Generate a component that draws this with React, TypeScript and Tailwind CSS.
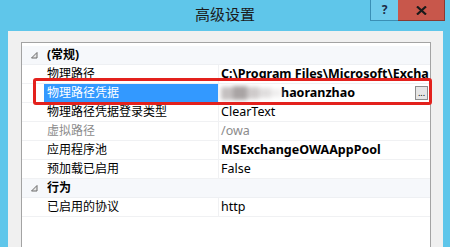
import React from "react";

interface Row {
  label: string;
  value?: string;
  category?: boolean;
  bold?: boolean;
  muted?: boolean;
  selected?: boolean;
}

const rows: Row[] = [
  { label: "(常规)", category: true },
  { label: "物理路径", value: "C:\\Program Files\\Microsoft\\Excha", bold: true },
  { label: "物理路径凭据", value: "haoranzhao", bold: true, selected: true },
  { label: "物理路径凭据登录类型", value: "ClearText" },
  { label: "虚拟路径", value: "/owa", muted: true },
  { label: "应用程序池", value: "MSExchangeOWAAppPool", bold: true },
  { label: "预加载已启用", value: "False" },
  { label: "行为", category: true },
  { label: "已启用的协议", value: "http" },
];

const font = { fontFamily: '"Noto Sans", "Noto Sans CJK SC", sans-serif' };

function Expander() {
  return (
    <svg width="7" height="7" viewBox="0 0 7 7">
      <path d="M6 0.5 L6 6 L0.5 6 Z" fill="#e8e8e8" stroke="#6b6b6b" strokeWidth="1" />
    </svg>
  );
}

function GridRow({ row }: { row: Row }) {
  if (row.category) {
    return (
      <div className="flex h-[19px] items-center bg-[#f6f8fb] border-b border-[#eef0f3]">
        <div className="w-[22px] flex justify-center pl-[2px]">
          <Expander />
        </div>
        <div className="pl-[3px] text-[12px] font-bold text-black leading-none">{row.label}</div>
      </div>
    );
  }
  return (
    <div className="flex h-[19px] items-stretch border-b border-[#f0f1f3]">
      <div className="w-[22px] shrink-0" />
      <div
        className={
          row.selected
            ? "w-[174px] shrink-0 flex items-center pl-[3px] bg-[#3399ff] text-white text-[12px]"
            : row.muted
            ? "w-[174px] shrink-0 flex items-center pl-[3px] text-[#8c8c8c] text-[12px]"
            : "w-[174px] shrink-0 flex items-center pl-[3px] text-black text-[12px]"
        }
      >
        {row.label}
      </div>
      <div className="flex-1 min-w-0 flex items-center pl-[2px] overflow-hidden border-l border-[#f0f1f3]">
        {row.selected && (
          <div className="flex items-center w-[60px] h-[14px] shrink-0 blur-[2px]">
            <div className="w-[12px] h-[13px] bg-[#c4c0c0]" />
            <div className="w-[14px] h-[14px] bg-[#a9a4a4]" />
            <div className="w-[12px] h-[12px] bg-[#cfcbcb]" />
            <div className="w-[12px] h-[10px] bg-[#e0dede]" />
            <div className="w-[10px] h-[8px] bg-[#efeeee]" />
          </div>
        )}
        <span
          className={
            (row.bold ? "font-bold " : "") +
            (row.muted ? "text-[#8c8c8c] " : "text-black ") +
            "text-[12.5px] whitespace-nowrap"
          }
        >
          {row.value}
        </span>
        {row.selected && (
          <div className="ml-auto mr-[2px] w-[13px] h-[14px] shrink-0 border border-[#8d8d8d] bg-[#e6e6e6] flex items-end justify-center text-[9px] leading-[9px] text-black pb-[2px]">
            ...
          </div>
        )}
      </div>
    </div>
  );
}

export default function App() {
  return (
    <div className="w-[450px] h-[247px] overflow-hidden flex flex-col bg-[#5fc6ea]" style={font}>
      <div className="h-[31px] shrink-0 grid grid-cols-[1fr_auto_1fr]">
        <div />
        <div className="pt-[3px] text-[15px] text-[#1b1b1b]" style={{ fontFamily: '"Noto Sans CJK SC", sans-serif' }}>
          高级设置
        </div>
        <div className="flex justify-end items-start pr-[5px]">
          <div className="w-[28px] h-[21px] bg-[#6fcbec] border-l border-b border-[#3a8fb5] flex items-center justify-center text-[12px] font-bold text-[#1c2a44]">
            ?
          </div>
          <div className="w-[47px] h-[21px] bg-[#c8574b] border-b border-r border-[#8a3a32] flex items-center justify-center">
            <svg width="11" height="9" viewBox="0 0 11 9">
              <path d="M1 0.5 L10 8.5 M10 0.5 L1 8.5" stroke="#1a1a1a" strokeWidth="2.2" />
            </svg>
          </div>
        </div>
      </div>
      <div className="flex-1 ml-[8px] mr-[7px] bg-[#f0f0f0] pt-[11px] pl-[13px] pr-[12px] flex flex-col">
        <div className="flex-1 relative bg-white border border-b-0 border-[#a3a3a3] pt-[3px]">
          {rows.map((row) => (
            <GridRow key={row.label} row={row} />
          ))}
          <div className="absolute left-[11px] top-[35px] w-[399px] h-[27px] border-[3px] border-[#e3211d] rounded-[3px] pointer-events-none" />
        </div>
      </div>
    </div>
  );
}
